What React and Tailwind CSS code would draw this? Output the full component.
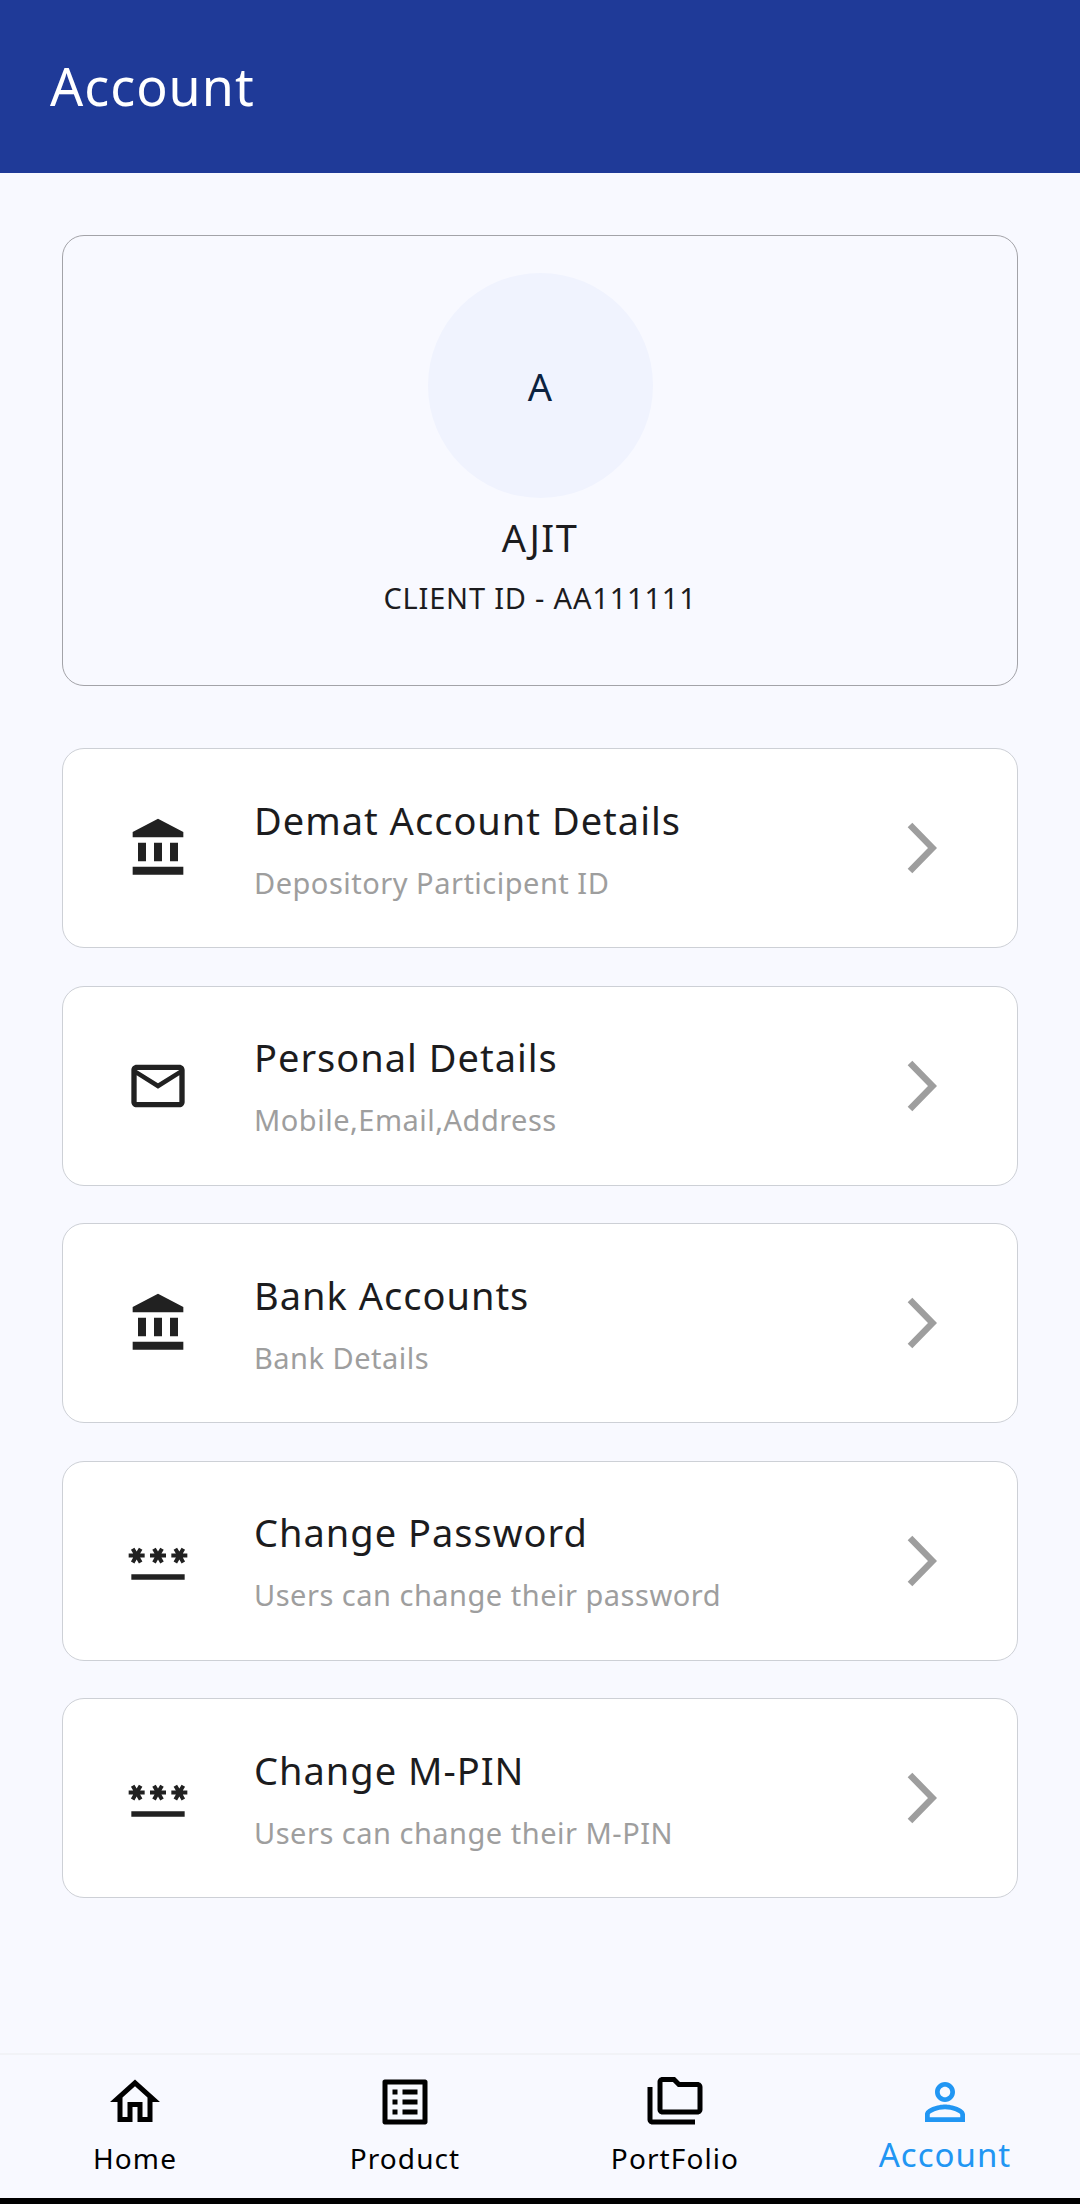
import React from "react";

const FONT = { fontFamily: '"Noto Sans", "Open Sans", sans-serif' };

function Icon({ d, box = "0 0 24 24", className }) {
  return (
    <svg viewBox={box} fill="currentColor" className={className} aria-hidden>
      <path d={d} />
    </svg>
  );
}

const BANK =
  "M4 10v7h3v-7H4zm6 0v7h3v-7h-3zM2 22h19v-3H2v3zm14-12v7h3v-7h-3zm-4.5-9L2 6v2h19V6l-9.5-5z";
const MAIL =
  "M20 4H4c-1.1 0-1.99.9-1.99 2L2 18c0 1.1.9 2 2 2h16c1.1 0 2-.9 2-2V6c0-1.1-.9-2-2-2zm0 14H4V8l8 5 8-5v10zm-8-7L4 6h16l-8 5z";
const PASSWORD =
  "M2 17h20v2H2v-2zm1.15-4.05L4 11.47l.85 1.48 1.3-.75-.85-1.48H7v-1.5H5.3l.85-1.47L4.85 7 4 8.47 3.15 7l-1.3.75.85 1.47H1v1.5h1.7l-.85 1.48 1.3.75zm6.7-.75l1.3.75.85-1.48.85 1.48 1.3-.75-.85-1.48H15v-1.5h-1.7l.85-1.47-1.3-.75L12 8.47 11.15 7l-1.3.75.85 1.47H9v1.5h1.7l-.85 1.48zM23 9.22h-1.7l.85-1.47-1.3-.75L20 8.47 19.15 7l-1.3.75.85 1.47H17v1.5h1.7l-.85 1.48 1.3.75.85-1.48.85 1.48 1.3-.75-.85-1.48H23v-1.5z";
const HOME =
  "M12 5.69l5 4.5V18h-2v-6H9v6H7v-7.81l5-4.5M12 3L2 12h3v8h6v-6h2v6h6v-8h3L12 3z";
const LIST =
  "M19 5v14H5V5h14m1.1-2H3.9c-.5 0-.9.4-.9.9v16.2c0 .4.4.9.9.9h16.2c.4 0 .9-.5.9-.9V3.9c0-.5-.5-.9-.9-.9zM11 7h6v2h-6V7zm0 4h6v2h-6v-2zm0 4h6v2h-6zM7 7h2v2H7zm0 4h2v2H7zm0 4h2v2H7z";
const FOLDER =
  "M3 19h17v2H3c-1.1 0-2-.9-2-2V6h2v13zM23 6v9c0 1.1-.9 2-2 2H7c-1.1 0-2-.9-2-2l.01-11C5.01 2.9 5.9 2 7 2h5l2 2h7c1.1 0 2 .9 2 2zM7 15h14V6h-7.83l-2-2H7v11z";
const PERSON =
  "M12 5.9c1.16 0 2.1.94 2.1 2.1s-.94 2.1-2.1 2.1S9.9 9.16 9.9 8s.94-2.1 2.1-2.1m0 9c2.97 0 6.1 1.46 6.1 2.1v1.1H5.9V17c0-.64 3.13-2.1 6.1-2.1M12 4C9.79 4 8 5.79 8 8s1.79 4 4 4 4-1.79 4-4-1.79-4-4-4zm0 9c-2.67 0-8 1.34-8 4v3h16v-3c0-2.66-5.33-4-8-4z";

const rows = [
  // the bank glyph sits half a unit left of its box, so nudge it back
  { icon: BANK, box: "-0.5 0 24 24", title: "Demat Account Details", sub: "Depository Participent ID" },
  { icon: MAIL, title: "Personal Details", sub: "Mobile,Email,Address" },
  { icon: BANK, box: "-0.5 0 24 24", title: "Bank Accounts", sub: "Bank Details" },
  { icon: PASSWORD, title: "Change Password", sub: "Users can change their password" },
  { icon: PASSWORD, title: "Change M-PIN", sub: "Users can change their M-PIN" },
];

const tabs = [
  { icon: HOME, label: "Home" },
  { icon: LIST, label: "Product" },
  { icon: FOLDER, label: "PortFolio" },
  { icon: PERSON, label: "Account", active: true },
];

function Row({ icon, box, title, sub }) {
  return (
    <div className="flex h-[200px] items-center rounded-[22px] border border-[#cdd0d6] bg-white pl-[63px] pr-[80px]">
      <Icon d={icon} box={box} className="h-[64px] w-[64px] text-[#212121]" />
      <div className="ml-[64px] flex flex-col">
        <span className="text-[38px] leading-[50px] tracking-[1px] text-[#1c1c1e]">{title}</span>
        <span className="mt-[19px] text-[29px] leading-[38px] tracking-[0.5px] text-[#9e9e9e]">{sub}</span>
      </div>
      <svg viewBox="0 0 30 52" className="ml-auto h-[52px] w-[30px] text-[#9e9e9e]" aria-hidden>
        <path d="M3 3l22.5 23L3 49" fill="none" stroke="currentColor" strokeWidth="6.5" />
      </svg>
    </div>
  );
}

export default function App() {
  return (
    <div className="flex h-[2204px] w-full flex-col bg-[#f8f9ff]" style={FONT}>
      <header className="flex h-[173px] items-center bg-[#1f3a98] px-[50px] pb-[2px]">
        <h1 className="text-[52px] font-normal leading-none tracking-[1px] text-white">Account</h1>
      </header>

      <main className="flex-1 px-[62px] pt-[62px]">
        <section className="flex h-[451px] flex-col items-center rounded-[22px] border border-[#a3a3a8] pt-[37px]">
          <div className="flex h-[225px] w-[225px] items-center justify-center rounded-full bg-[#f0f3fe] pt-[1px] text-[38px] text-[#0b2240]">
            A
          </div>
          <p className="mt-[14px] text-[38px] leading-[50px] tracking-[1.5px] text-[#1c1c1e]">AJIT</p>
          <p className="mt-[16px] text-[29px] leading-[40px] tracking-[0.8px] text-[#1c1c1e]">CLIENT ID - AA111111</p>
        </section>

        <div className="mt-[62px] flex flex-col gap-[37.5px]">
          {rows.map((r) => (
            <Row key={r.title} {...r} />
          ))}
        </div>
      </main>

      <nav className="grid h-[145px] grid-cols-4 border-t-2 border-[#f2f3f7] bg-[#f8f9ff]">
        {tabs.map((t) => (
          <div
            key={t.label}
            className={`flex flex-col items-center pt-[17px] ${t.active ? "text-[#2196f3]" : "text-black"}`}
          >
            <Icon d={t.icon} className="h-[60px] w-[60px]" />
            <span className={t.active ? "mt-[1px] text-[33px] leading-[44px] tracking-[1px]" : "mt-[6px] text-[28px] leading-[40px] tracking-[1.1px]"}>
              {t.label}
            </span>
          </div>
        ))}
      </nav>
      <div className="h-[6px] bg-black" />
    </div>
  );
}
